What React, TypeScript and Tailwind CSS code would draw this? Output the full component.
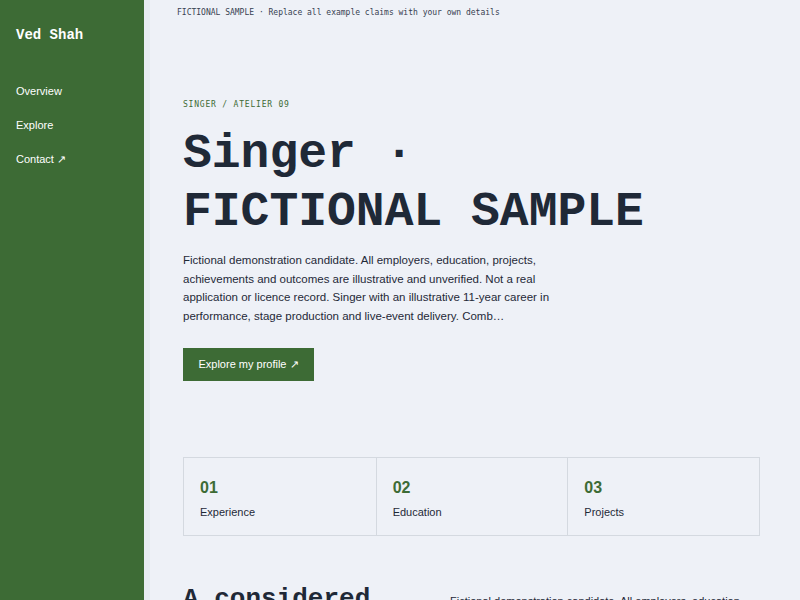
import React from "react";

const mono = { fontFamily: '"Courier New", "Liberation Mono", monospace' };

export default function App() {
  return (
    <div className="flex min-h-screen bg-[#eef1f7] text-[#1f2937]" style={{ fontFamily: 'Arial, "Liberation Sans", Helvetica, sans-serif' }}>
      <aside className="w-[144px] shrink-0 bg-[#3d6b35] text-white border-r-[6px] border-[#e6ebf2] box-content min-h-screen">
        <div className="px-4 pt-[26px] text-[14px] font-bold leading-[18px]" style={mono}>Ved Shah</div>
        <nav className="mt-[39px] flex flex-col gap-[18px] px-4 text-[11px]">
          <a className="leading-[16px]">Overview</a>
          <a className="leading-[16px]">Explore</a>
          <a className="leading-[16px]">Contact ↗</a>
        </nav>
      </aside>
      <main className="flex-1 min-w-0 overflow-hidden">
        <div className="px-[27px] pt-[7px] text-[8px] text-[#374151]" style={{ fontFamily: '"DejaVu Sans Mono", monospace' }}>
          FICTIONAL SAMPLE · Replace all example claims with your own details
        </div>
        <section className="pl-[33px] pr-[40px] pt-[80px]">
          <div className="text-[8px] tracking-[0.1em] text-[#3d6b35]" style={{ fontFamily: '"DejaVu Sans Mono", monospace' }}>SINGER / ATELIER 09</div>
          <h1 className="mt-[14px] max-w-[490px] text-[48px] font-bold leading-[58px] text-[#1f2937]" style={mono}>
            Singer · FICTIONAL SAMPLE
          </h1>
          <p className="mt-[10px] max-w-[368px] text-[11.5px] leading-[18.7px] text-[#1f2937]">
            Fictional demonstration candidate. All employers, education, projects, achievements and outcomes are illustrative and unverified. Not a real application or licence record. Singer with an illustrative 11-year career in performance, stage production and live-event delivery. Comb…
          </p>
          <button className="mt-[22px] h-[33px] w-[131px] bg-[#3d6b35] text-[11px] text-white">Explore my profile ↗</button>
          <div className="mt-[76px] grid grid-cols-3 border border-[#d4d9e0]">
            {[["01", "Experience"], ["02", "Education"], ["03", "Projects"]].map(([n, l], i) => (
              <div key={n} className={"px-4 pt-[20px] pb-[15px] " + (i > 0 ? "border-l border-[#d4d9e0]" : "")}>
                <div className="text-[16px] font-bold leading-[20px] text-[#3d6b35]">{n}</div>
                <div className="mt-[6px] text-[11px] leading-[16px] text-[#1f2937]">{l}</div>
              </div>
            ))}
          </div>
          <div className="mt-[48px] grid grid-cols-[267px_1fr]">
            <h2 className="text-[26px] font-bold leading-[31px]" style={mono}>A considered</h2>
            <p className="pt-[8px] text-[11px] leading-[18px] text-[#1f2937]">Fictional demonstration candidate. All employers, education, projects…</p>
          </div>
        </section>
      </main>
    </div>
  );
}
